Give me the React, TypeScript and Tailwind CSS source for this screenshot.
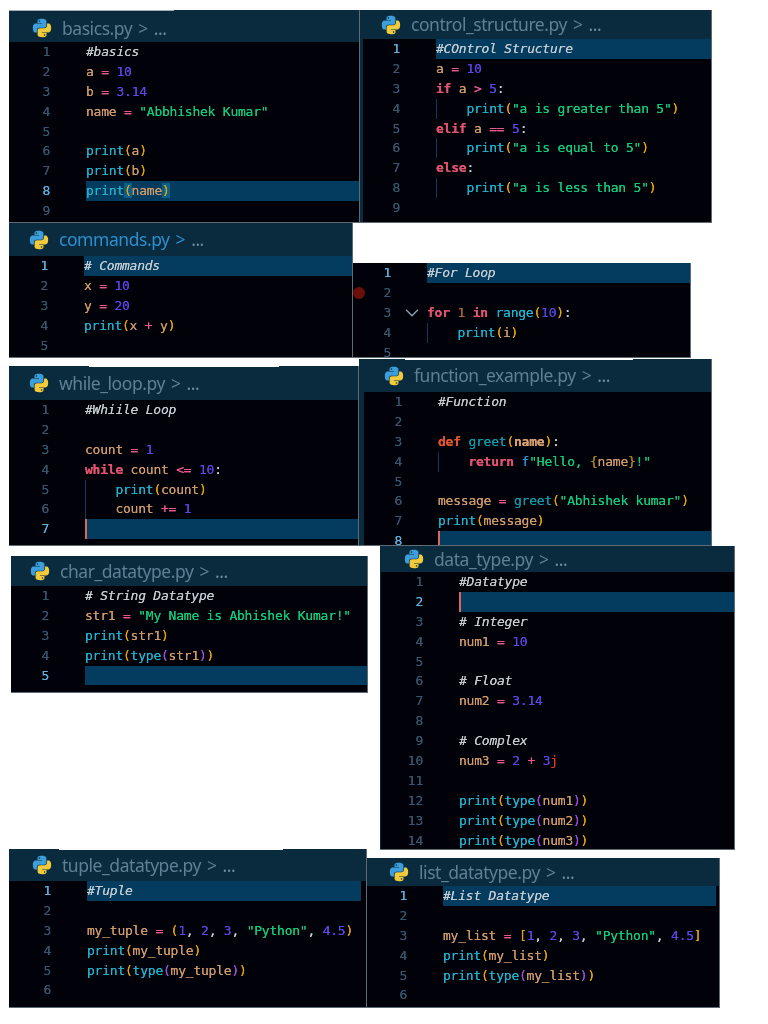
import type { ReactNode } from 'react';
import { ChevronDown } from 'lucide-react';

type Tok = [string, string];
type Line = { t?: Tok[]; active?: boolean; cursor?: boolean; guide?: boolean; mark?: ReactNode };

const VAR = 'text-[#cf9a68]';
const OP = 'text-[#e8588f]';
const NUM = 'text-[#5a46e0]';
const STR = 'text-[#12c97c]';
const FN = 'text-[#1fb2cc]';
const P1 = 'text-[#e6a400]';
const P2 = 'text-[#a04fd8]';
const KW = 'font-bold text-[#e0526f]';
const COM = 'italic text-[#c4cbd0]';
const PUN = 'text-[#c9d2d8]';

const v = (s: string): Tok => [VAR, s];
const o = (s: string): Tok => [OP, s];
const n = (s: string): Tok => [NUM, s];
const s = (x: string): Tok => [STR, x];
const f = (x: string): Tok => [FN, x];
const y = (x: string): Tok => [P1, x];
const p = (x: string): Tok => [P2, x];
const k = (x: string): Tok => [KW, x];
const c = (x: string): Tok => [COM, x];
const u = (x: string): Tok => [PUN, x];
const sp = (x = ' '): Tok => ['', x];

const assign = (name: string, val: string): Line => ({ t: [v(name), sp(), o('='), sp(), n(val)] });
const printType = (name: string): Line => ({ t: [f('print'), y('('), f('type'), p('('), v(name), p(')'), y(')')] });
const printVar = (name: string): Line => ({ t: [f('print'), y('('), v(name), y(')')] });
const printStr = (text: string): Line => ({ guide: true, t: [sp('    '), f('print'), y('('), s(text), y(')')] });

function PythonIcon() {
  return (
    <svg viewBox="0 0 24 24" className="h-[22px] w-[22px] shrink-0">
      <path
        fill="#3c9fdc"
        d="M11.9 2C6.8 2 7.1 4.2 7.1 4.2l0 2.3h4.9v.7H5.2S2 6.8 2 12s2.8 5 2.8 5h1.7v-2.4s-.1-2.8 2.8-2.8h4.8s2.7 0 2.7-2.6V4.7S16.9 2 11.9 2zM9.2 3.5a.9.9 0 1 1 0 1.8.9.9 0 0 1 0-1.8z"
      />
      <path
        fill="#f2cb3c"
        transform="rotate(180 12 12)"
        d="M11.9 2C6.8 2 7.1 4.2 7.1 4.2l0 2.3h4.9v.7H5.2S2 6.8 2 12s2.8 5 2.8 5h1.7v-2.4s-.1-2.8 2.8-2.8h4.8s2.7 0 2.7-2.6V4.7S16.9 2 11.9 2zM9.2 3.5a.9.9 0 1 1 0 1.8.9.9 0 0 1 0-1.8z"
      />
    </svg>
  );
}

function Header({ name, className, nameColor = 'text-[#5f8094]' }: { name: string; className: string; nameColor?: string }) {
  return (
    <div className={`flex shrink-0 items-center gap-[9px] font-['Noto_Sans',sans-serif] text-[17.5px] tracking-[-0.45px] ${className}`}>
      <PythonIcon />
      <div className="flex items-center gap-[6px]">
        <span className={nameColor}>{name}</span>
        <span className={nameColor}>&gt;</span>
        <span className="text-[#6f8c9e]">...</span>
      </div>
    </div>
  );
}

function Code({ lines, gutter, className = '' }: { lines: Line[]; gutter: string; className?: string }) {
  return (
    <div
      className={`min-h-0 flex-1 overflow-hidden bg-[#01010a] font-['DejaVu_Sans_Mono',monospace] text-[13px] tracking-[-0.23px] [text-shadow:0_0_0.6px_currentColor] ${className}`}
    >
      {lines.map((l, i) => (
        <div key={i} className="relative flex h-[19.9px] items-center leading-[19.9px] whitespace-pre">
          {l.mark}
          <span className={`shrink-0 text-right ${gutter} ${l.active ? 'text-[#5fb0dc]' : 'text-[#38566a]'}`}>{i + 1}</span>
          <div
            className={`ml-[36px] h-full min-w-0 flex-1 ${l.active ? 'bg-[#033c5e]' : ''} ${l.guide ? 'shadow-[inset_1px_0_0_#143a52]' : ''} ${l.cursor ? 'shadow-[inset_2px_0_0_#d8685e]' : ''}`}
          >
            {l.t?.map(([cls, text], j) => (
              <span key={j} className={cls}>
                {text}
              </span>
            ))}
          </div>
        </div>
      ))}
    </div>
  );
}

function Win({ className, children, notch }: { className: string; children: ReactNode; notch?: string }) {
  return (
    <div className={`absolute flex flex-col overflow-hidden bg-[#0a2b3e] ${className}`}>
      {children}
      <div className="pointer-events-none absolute inset-0 border-r border-b border-[#5d6c74]" />
      {notch && <div className={`absolute top-0 h-px ${notch}`} />}
    </div>
  );
}

export default function App() {
  return (
    <div className="relative h-[1024px] w-[768px] overflow-hidden bg-white blur-[0.3px]">
      <Win className="top-[10px] left-[9px] h-[213px] w-[351px]" notch="left-0 w-[165px] bg-[#a9acae]">
        <Header name="basics.py" className="h-[32px] pt-[4px] pl-[22px]" />
        <Code
          gutter="w-[41px]"
          lines={[
            { t: [c('#basics')] },
            assign('a', '10'),
            assign('b', '3.14'),
            { t: [v('name'), sp(), o('='), sp(), s('"Abbhishek Kumar"')] },
            {},
            printVar('a'),
            printVar('b'),
            {
              active: true,
              t: [
                f('print'),
                ['bg-[#0b5f88] text-[#e6a400]', '('],
                v('name'),
                ['bg-[#0b5f88] text-[#e6a400]', ')'],
              ],
            },
            {},
          ]}
        />
      </Win>

      <Win className="top-[10px] left-[360px] h-[213px] w-[352px]">
        <Header name="control_structure.py" className="h-[29px] pl-[20px]" />
        <Code
          className="ml-[3px]"
          gutter="w-[37px]"
          lines={[
            { active: true, t: [c('#COntrol Structure')] },
            assign('a', '10'),
            { t: [k('if'), sp(), v('a'), sp(), o('>'), sp(), n('5'), u(':')] },
            printStr('"a is greater than 5"'),
            { t: [k('elif'), sp(), v('a'), sp(), o('=='), sp(), n('5'), u(':')] },
            printStr('"a is equal to 5"'),
            { t: [k('else'), u(':')] },
            printStr('"a is less than 5"'),
            {},
          ]}
        />
      </Win>

      <Win className="top-[223px] left-[9px] h-[135px] w-[344px]">
        <Header name="commands.py" nameColor="text-[#2c8fcf]" className="h-[33px] pl-[19px]" />
        <Code
          gutter="w-[39px]"
          lines={[
            { active: true, t: [c('# Commands')] },
            assign('x', '10'),
            assign('y', '20'),
            { t: [f('print'), y('('), v('x'), sp(), o('+'), sp(), v('y'), y(')')] },
            {},
          ]}
        />
      </Win>

      <Win className="top-[263px] left-[353px] h-[95px] w-[338px]">
        <Code
          gutter="w-[38px]"
          lines={[
            { active: true, t: [c('#For Loop')] },
            { mark: <span className="absolute top-[4px] left-0 h-[12px] w-[12px] rounded-full bg-[#6a0f0a]" /> },
            {
              mark: <ChevronDown className="absolute top-[-1px] left-[48px] text-[#8a9aa5]" size={22} strokeWidth={1.6} />,
              t: [k('for'), sp(), ['text-[#a8643c]', '1'], sp(), k('in'), sp(), f('range'), y('('), n('10'), y(')'), u(':')],
            },
            { guide: true, t: [sp('    '), f('print'), y('('), v('i'), y(')')] },
            {},
          ]}
        />
      </Win>

      <Win className="top-[366px] left-[9px] h-[180px] w-[350px]" notch="left-[80px] w-[190px] bg-white">
        <Header name="while_loop.py" className="h-[34px] pl-[19px]" />
        <Code
          gutter="w-[40px]"
          lines={[
            { t: [c('#Whiile Loop')] },
            {},
            assign('count', '1'),
            { t: [k('while'), sp(), v('count'), sp(), o('<='), sp(), n('10'), u(':')] },
            { guide: true, t: [sp('    '), f('print'), y('('), v('count'), y(')')] },
            { guide: true, t: [sp('    '), v('count'), sp(), o('+='), sp(), n('1')] },
            { active: true, cursor: true },
          ]}
        />
      </Win>

      <Win className="top-[359px] left-[359px] h-[187px] w-[353px]" notch="left-[46px] w-[228px] bg-white">
        <Header name="function_example.py" className="h-[33px] pl-[24px]" />
        <Code
          className="ml-[5px]"
          gutter="w-[38px]"
          lines={[
            { t: [c('#Function')] },
            {},
            { t: [['font-bold text-[#e2552f]', 'def'], sp(), ['text-[#0f9aa8]', 'greet'], y('('), ['font-bold text-[#d9a070]', 'name'], y(')'), u(':')] },
            {
              guide: true,
              t: [
                sp('    '),
                k('return'),
                sp(),
                ['text-[#2f8fdc]', 'f'],
                s('"Hello, '),
                ['text-[#a88420]', '{'],
                v('name'),
                ['text-[#a88420]', '}'],
                s('!"'),
              ],
            },
            {},
            { t: [v('message'), sp(), o('='), sp(), ['text-[#0f9aa8]', 'greet'], y('('), s('"Abhishek kumar"'), y(')')] },
            { t: [f('print'), y('('), v('message'), y(')')] },
            { active: true, cursor: true },
          ]}
        />
      </Win>

      <Win className="top-[556px] left-[11px] h-[137px] w-[357px]">
        <Header name="char_datatype.py" className="h-[30px] pl-[18px]" />
        <Code
          className="pr-px"
          gutter="w-[38px]"
          lines={[
            { t: [c('# String Datatype')] },
            { t: [v('str1'), sp(), o('='), sp(), s('"My Name is Abhishek Kumar!"')] },
            printVar('str1'),
            printType('str1'),
            { active: true },
          ]}
        />
      </Win>

      <Win className="top-[546px] left-[380px] h-[304px] w-[355px]">
        <Header name="data_type.py" className="h-[26px] pl-[23px]" />
        <Code
          className="ml-[1px]"
          gutter="w-[42px]"
          lines={[
            { t: [c('#Datatype')] },
            { active: true, cursor: true },
            { t: [c('# Integer')] },
            assign('num1', '10'),
            {},
            { t: [c('# Float')] },
            assign('num2', '3.14'),
            {},
            { t: [c('# Complex')] },
            { t: [v('num3'), sp(), o('='), sp(), n('2'), sp(), o('+'), sp(), n('3'), ['text-[#d8401f]', 'j']] },
            {},
            printType('num1'),
            printType('num2'),
            printType('num3'),
          ]}
        />
      </Win>

      <Win className="top-[849px] left-[9px] h-[159px] w-[358px]" notch="left-[50px] w-[224px] bg-white">
        <Header name="tuple_datatype.py" className="h-[32px] pl-[22px]" />
        <Code
          className="pr-[6px]"
          gutter="w-[42px]"
          lines={[
            { active: true, t: [c('#Tuple')] },
            {},
            {
              t: [
                v('my_tuple'),
                sp(),
                o('='),
                sp(),
                y('('),
                n('1'),
                u(', '),
                n('2'),
                u(', '),
                n('3'),
                u(', '),
                s('"Python"'),
                u(', '),
                n('4.5'),
                y(')'),
              ],
            },
            printVar('my_tuple'),
            printType('my_tuple'),
            {},
          ]}
        />
      </Win>

      <Win className="top-[858px] left-[367px] h-[150px] w-[353px]">
        <Header name="list_datatype.py" className="h-[28px] pl-[21px]" />
        <Code
          className="pr-[4px]"
          gutter="w-[40px]"
          lines={[
            { active: true, t: [c('#List Datatype')] },
            {},
            {
              t: [
                v('my_list'),
                sp(),
                o('='),
                sp(),
                y('['),
                n('1'),
                u(', '),
                n('2'),
                u(', '),
                n('3'),
                u(', '),
                s('"Python"'),
                u(', '),
                n('4.5'),
                y(']'),
              ],
            },
            printVar('my_list'),
            printType('my_list'),
            {},
          ]}
        />
      </Win>
    </div>
  );
}
